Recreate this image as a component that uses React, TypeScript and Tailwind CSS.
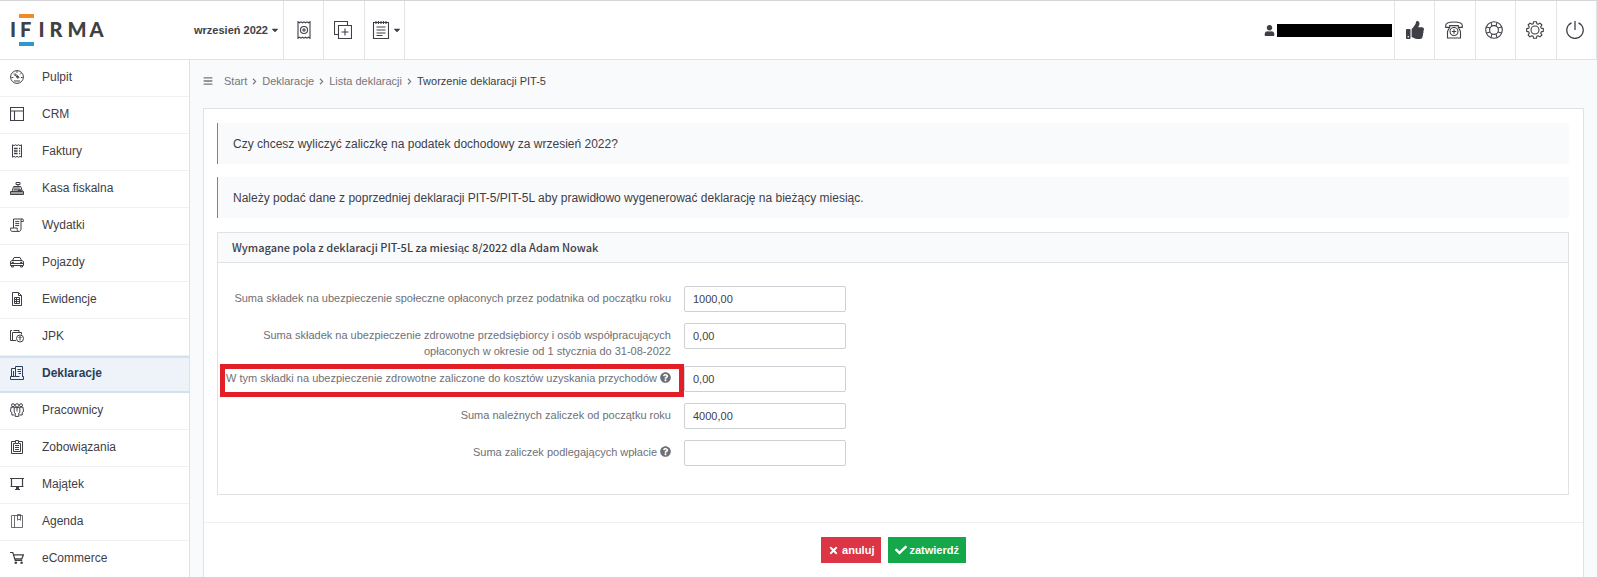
import { useState } from "react";
import type { ReactNode } from "react";
import {
  FaBars,
  FaCaretDown,
  FaCheck,
  FaChevronRight,
  FaQuestionCircle,
  FaThumbsUp,
  FaTimes,
  FaUser,
} from "react-icons/fa";

// line icons, drawn on a 14px grid for the menu and an 18px grid for the top bar
function MenuIcon({ children }: { children: ReactNode }) {
  return (
    <svg width="14" height="14" viewBox="0 0 14 14" fill="none" stroke="currentColor" strokeWidth="1" aria-hidden="true">
      {children}
    </svg>
  );
}

function BarIcon({ children }: { children: ReactNode }) {
  return (
    <svg width="18" height="18" viewBox="0 0 18 18" fill="none" stroke="currentColor" strokeWidth="1.1" aria-hidden="true">
      {children}
    </svg>
  );
}

const menu = [
  {
    label: "Pulpit",
    icon: (
      <>
        <circle cx="7" cy="7" r="6.4" />
        <path d="M3.6 4.2 8 7.6M4.6 3.4 8.6 6.8M1.5 7.5h1.8M10.8 7.5h1.8M7 1.2v1.6M11.2 3.2 10 4.4M4 11h6" />
        <circle cx="7.8" cy="7.2" r="1" />
      </>
    ),
  },
  {
    label: "CRM",
    icon: <path d="M.5.5h13v13H.5zM.5 4h13M4.500 4v9.500" strokeWidth="1.1" />,
  },
  {
    label: "Faktury",
    icon: (
      <>
        <path d="M2.5.8 4 1.6 5.5.8 7 1.6 8.500.8 10 1.6 11.500.8v12.400l-1.500-.8-1.500.8-1.500-.8-1.500.8-1.500-.8-1.500.8z" />
        <path d="M4 4.500h3.600M4 7h3.600M4 9.500h3.600M9 4.500h1.200M9 7h1.200M9 9.500h1.200" strokeWidth="1.3" />
      </>
    ),
  },
  {
    label: "Kasa fiskalna",
    icon: (
      <>
        <path d="M.5 10.500h13v3H.5zM2 10.500l1.600-5h7.200l1.600 5M8 5.200V3.500M6 1.500h4v2H6z" />
        <path d="M4 7h6M3.500 8.800h4M1 12h12" strokeWidth="1.2" />
        <path d="M7.500 8.200h4v1.800h-4z" fill="currentColor" stroke="none" />
      </>
    ),
  },
  {
    label: "Wydatki",
    icon: (
      <>
        <path d="M3.5 10V1h8.8c-1 0-1.3.8-1.3 1.6V11c0 1.4-.8 2.4-2 2.4H2.2C1.2 13.4.6 12.6.6 11.5V10h6.6v1.6c0 1.2.7 1.8 1.6 1.8M11 3.4h2.4V2.2c0-.7-.5-1.2-1.1-1.2" />
        <path d="M5.2 3.6h4M5.2 5.6h4M5.2 7.6h4" />
      </>
    ),
  },
  {
    label: "Pojazdy",
    icon: (
      <>
        <path d="M2.500 5.500 4 2.500h6l1.500 3M.5 6.500 2 5.500h10l1.500 1v4H.5zM.5 8.500h13M1.500 10.500v1.500h2v-1.500M10.500 10.500v1.500h2v-1.500" />
        <path d="M1.800 7.400h2M10.200 7.400h2" strokeWidth="1.2" />
      </>
    ),
  },
  {
    label: "Ewidencje",
    icon: (
      <>
        <path d="M2.500.5h6l3 3v10h-9zM8.500.5v3h3" />
        <path d="M4.500 5.500h5v6h-5zM4.500 7.500h5M4.500 9.500h5M6.500 5.500v6" />
      </>
    ),
  },
  {
    label: "JPK",
    icon: (
      <>
        <path d="M6 11.500H.5v-10H2M2.500 11v-7.500h9v2M3.500 1.500H9v2" />
        <circle cx="10" cy="9.500" r="3.500" />
        <path d="M10 11.500V7.600M8.600 9 10 7.500 11.400 9" />
      </>
    ),
  },
  {
    label: "Deklaracje",
    icon: (
      <>
        <path d="M5.500 10.500H.5v3h13v-3h-1M1.500 10.500v-8H5M12.500 11V.5h-7v10h4M3.500 5v5" />
        <path d="M7.500 3.500h3.500M7.500 5.500h3.500M8.500 7.500h2.500" />
      </>
    ),
  },
  {
    label: "Pracownicy",
    icon: (
      <>
        <circle cx="3" cy="2.200" r="1.500" />
        <circle cx="7" cy="2.400" r="1.700" />
        <circle cx="11" cy="2.200" r="1.500" />
        <path d="M4.200 4.600h5.600v4.600L8.800 10v3.400H5.200V10l-1-.8zM4 4.200H1L.5 8.500l1.300.8V12h2.600M10 4.200h3l.5 4.300-1.300.8V12H9.600M7 5v3.500" />
      </>
    ),
  },
  {
    label: "Zobowiązania",
    icon: (
      <>
        <path d="M5 1.500H1.500v12h11v-12H9M5 3.500H3.500v8h7v-8H9" />
        <path d="M5.500.5h3v3h-3zM5 5.500h4M5 7.500h4M5 9.500h4" />
      </>
    ),
  },
  {
    label: "Majątek",
    icon: (
      <>
        <path d="M0 1.500h14M1.500 1.500v8M12.500 1.500v8M.5 9.500h13" strokeWidth="1.200" />
        <path d="M5 12.500h5" />
        <path d="M6 10h3v2.500H6z" fill="currentColor" stroke="none" />
      </>
    ),
  },
  {
    label: "Agenda",
    icon: <path d="M1.500 1.500h11v12h-11zM4.500 1.500v12M7.500.5h3v5.800L9 5 7.500 6.300z" strokeOpacity=".75" />,
  },
  {
    label: "eCommerce",
    icon: (
      <>
        <path d="M0 1.500h2.800l2.400 7.800h7M3.500 3.800h9.900l-1.600 4H5" strokeWidth="1.200" />
        <circle cx="5.800" cy="11.800" r="1.300" fill="currentColor" stroke="none" />
        <circle cx="11.600" cy="11.800" r="1.300" fill="currentColor" stroke="none" />
      </>
    ),
  },
];

const tools = [
  {
    label: "Pomoc telefoniczna",
    icon: (
      <>
        <path d="M.7 6.400V4.600C.7 2.600 3 1 9 1s8.300 1.600 8.300 3.600v1.800h-4V4.600H4.700v1.800z" />
        <path d="M4.400 6.600C4 8.500 2.500 9 2.500 11v6h13v-6c0-2-1.500-2.500-1.900-4.400" />
        <circle cx="9" cy="10.500" r="4" />
        <path d="M9 8.300v4.400M6.800 10.500h4.400" />
      </>
    ),
  },
  {
    label: "Pomoc",
    icon: (
      <>
        <circle cx="9" cy="9" r="8.300" />
        <circle cx="9" cy="9" r="4.400" />
        <path d="M6 1.400 7 5.100M12 1.400 11 5.100M6 16.600 7 12.900M12 16.600 11 12.900M1.400 6 5.100 7M1.400 12 5.100 11M16.600 6 12.900 7M16.600 12 12.900 11" />
      </>
    ),
  },
  {
    label: "Ustawienia",
    icon: (
      <>
        <circle cx="9" cy="9" r="4" />
        <path d="M7.600.7h2.800l.5 2.100 1.200.5 1.900-1.200 1.900 1.900-1.200 1.900.5 1.200 2.100.5v2.800l-2.100.5-.5 1.200 1.200 1.900-1.900 1.900-1.900-1.200-1.200.5-.5 2.100H7.600l-.5-2.100-1.200-.5L4 15.900 2.100 14l1.200-1.900-.5-1.200-2.100-.5V7.600l2.100-.5.5-1.200L2.100 4 4 2.100l1.900 1.200 1.200-.5z" strokeLinejoin="round" />
      </>
    ),
  },
  {
    label: "Wyloguj",
    icon: <path d="M9 0v9M5.500 1.800a8.200 8.200 0 1 0 7 0" strokeWidth="1.300" />,
  },
];

type Field = { name: string; label: string; help?: boolean; marked?: boolean };

const fields: Field[] = [
  { name: "spoleczne", label: "Suma składek na ubezpieczenie społeczne opłaconych przez podatnika od początku roku" },
  {
    name: "zdrowotne",
    label:
      "Suma składek na ubezpieczenie zdrowotne przedsiębiorcy i osób współpracujących opłaconych w okresie od 1 stycznia do 31-08-2022",
  },
  {
    name: "koszty",
    label: "W tym składki na ubezpieczenie zdrowotne zaliczone do kosztów uzyskania przychodów",
    help: true,
    marked: true,
  },
  { name: "nalezne", label: "Suma należnych zaliczek od początku roku" },
  { name: "wplata", label: "Suma zaliczek podlegających wpłacie", help: true },
];

function Logo() {
  return (
    <svg width="96" height="34" viewBox="0 0 96 34" role="img" aria-label="IFIRMA">
      <rect x="9" y="1" width="15" height="4" fill="#f08c28" />
      <rect x="9" y="29" width="15" height="4" fill="#2f96d0" />
      <text x="0 10 28.500 39.500 57.500 79.500" y="24" fontFamily="Lato, sans-serif" fontWeight="900" fontSize="20" fill="#414042">
        IFIRMA
      </text>
    </svg>
  );
}

function Header() {
  const cell = "flex items-center border-l border-[#e3e4e6]";
  return (
    <header className="flex h-[60px] justify-between border-y border-t-[#d5d5d7] border-b-[#e1e2e4] bg-white">
      <div className="flex">
        <a href="#" className="flex w-[189px] items-center pl-[10px]">
          <Logo />
        </a>
        <button className="flex w-[94px] items-center justify-between pr-[3px] pl-[5px] text-[11px] font-bold whitespace-nowrap">
          wrzesień 2022
          <FaCaretDown size={10} />
        </button>
        <div className="grid w-[122px] grid-cols-3 border-r border-[#e3e4e6]">
          <button className={`${cell} justify-center`} aria-label="Nowy paragon">
            <BarIcon>
              <path d="M3 .8 4.500 1.800 6 .8 7.500 1.800 9 .8l1.500 1 1.500-1 1.500 1 1.500-1v16.400l-1.500-1-1.500 1-1.500-1-1.500 1-1.500-1-1.500 1-1.500-1-1.500 1z" />
              <circle cx="9" cy="9" r="3.500" />
              <path d="M9 7v4M7 9h4" />
            </BarIcon>
          </button>
          <button className={`${cell} justify-center pr-[2px]`} aria-label="Dodaj">
            <BarIcon>
              <path d="M4.500 13.500h-4V.5h13v4M4.500 4.500h13v13h-13zM11 7.500v7M7.500 11h7" />
            </BarIcon>
          </button>
          <button className={`${cell} justify-end gap-[2px] pr-[2px]`} aria-label="Lista">
            <BarIcon>
              <path d="M1.500 1.500h15v16h-15zM4.500 6h9M4.500 9h9M4.500 12h9M4.500 14.500h6" />
              <path d="M4 0v3M6.500 0v3M9 0v3M11.500 0v3M14 0v3" />
            </BarIcon>
            <FaCaretDown size={10} />
          </button>
        </div>
      </div>
      <div className="flex">
        <div className="flex items-center gap-[2px] pr-[2px]">
          <FaUser size={11} />
          <div className="h-[13px] w-[115px] bg-black" />
        </div>
        <div className="grid w-[203px] grid-cols-5 border-r border-[#e3e4e6]">
          <button className={`${cell} justify-center`} aria-label="Poleć nas">
            <FaThumbsUp size={18} />
          </button>
          {tools.map((t) => (
            <button key={t.label} className={`${cell} justify-center pr-[2px]`} aria-label={t.label}>
              <BarIcon>{t.icon}</BarIcon>
            </button>
          ))}
        </div>
      </div>
    </header>
  );
}

function Sidebar() {
  return (
    <nav className="w-[190px] shrink-0 border-r border-[#dfe2e3] bg-white">
      {menu.map((item) => {
        const active = item.label === "Deklaracje";
        return (
          <a
            key={item.label}
            href="#"
            className={`flex h-[37px] items-center gap-[18px] pl-[10px] text-xs last:h-9 last:border-b-0 ${
              active
                ? "border-y-2 border-[#d3e1ee] bg-[#eef3fa] pb-[3px] font-bold text-[#2c3e57]"
                : "border-b border-[#f0f1f2] pb-[2px]"
            }`}
          >
            <MenuIcon>{item.icon}</MenuIcon>
            {item.label}
          </a>
        );
      })}
    </nav>
  );
}

function Breadcrumbs() {
  const links = ["Start", "Deklaracje", "Lista deklaracji"];
  return (
    <div className="flex h-12 items-center pb-[6px] text-[11px] text-[#74757b]">
      <button className="mr-[11px]" aria-label="Zwiń menu">
        <FaBars size={10} />
      </button>
      {links.map((l) => (
        <span key={l} className="mr-1 flex items-center gap-1">
          <a href="#">{l}</a>
          <FaChevronRight size={7} />
        </span>
      ))}
      <span className="text-[#3c3d44]">Tworzenie deklaracji PIT-5</span>
    </div>
  );
}

function Notice({ children }: { children: ReactNode }) {
  return (
    <p className="flex h-[41px] items-center rounded-r-xs border-l border-l-[#2ba3bd] bg-[#f9fafc] pl-[15px] text-xs">
      {children}
    </p>
  );
}

export default function App() {
  const [values, setValues] = useState<Record<string, string>>({
    spoleczne: "1000,00",
    zdrowotne: "0,00",
    koszty: "0,00",
    nalezne: "4000,00",
    wplata: "",
  });

  const handleChange = (e: React.ChangeEvent<HTMLInputElement>) => {
    setValues({ ...values, [e.target.name]: e.target.value });
  };

  return (
    <div className="flex min-h-screen flex-col bg-[#f9fafc] font-['Liberation_Sans',Arial,sans-serif] text-[#3f4047]">
      <Header />
      <div className="flex flex-1">
        <Sidebar />
        <main className="flex min-w-0 flex-1 flex-col px-[13px]">
          <Breadcrumbs />
          <form className="flex-1 border border-b-0 border-[#e1e2e4] bg-white" onSubmit={(e) => e.preventDefault()}>
            <div className="pt-[14px] pr-[14px] pb-[27px] pl-[13px]">
              <div className="mb-[14px] flex flex-col gap-[13px]">
                <Notice>Czy chcesz wyliczyć zaliczkę na podatek dochodowy za wrzesień 2022?</Notice>
                <Notice>
                  Należy podać dane z poprzedniej deklaracji PIT-5/PIT-5L aby prawidłowo wygenerować deklarację na
                  bieżący miesiąc.
                </Notice>
              </div>

              <section className="border border-[#e1e2e4]">
                <h2 className="flex h-[30px] items-center border-b border-[#e1e2e4] bg-[#f9fafb] pb-px pl-[14px] font-['Noto_Sans_CJK_SC',sans-serif] text-[11px] font-medium">
                  Wymagane pola z deklaracji PIT-5L za miesiąc 8/2022 dla Adam Nowak
                </h2>
                <div className="pt-[23px] pb-[17px]">
                  {fields.map((f) => (
                    <div key={f.name} className="flex min-h-[37px] items-start">
                      <div className="relative w-[466px] pt-1 pr-[13px] pb-[7px] text-right text-[11px] leading-4 text-[#6f7076]">
                        <label htmlFor={f.name}>{f.label}</label>
                        {f.help && <FaQuestionCircle size={11} className="ml-[3px] inline align-[-1px]" />}
                        {f.marked && (
                          <div className="absolute -top-[2px] right-0 left-[2px] h-[33px] border-[5px] border-[#e41e26]" />
                        )}
                      </div>
                      <input
                        id={f.name}
                        name={f.name}
                        type="text"
                        value={values[f.name]}
                        onChange={handleChange}
                        className="h-[26px] w-[162px] rounded-xs border border-[#cdd0d4] bg-white px-2 text-[11px] focus:outline-none"
                      />
                    </div>
                  ))}
                </div>
              </section>
            </div>

            <div className="flex justify-center gap-[7px] border-t border-[#efeff1] pt-[14px] text-[11px] font-bold text-white">
              <button type="button" className="flex h-[26px] items-center gap-[3px] bg-[#dc3545] px-[7px]">
                <FaTimes size={11} />
                anuluj
              </button>
              <button type="submit" className="flex h-[26px] items-center gap-[2px] bg-[#15a84a] px-[7px]">
                <FaCheck size={12} />
                zatwierdź
              </button>
            </div>
          </form>
        </main>
      </div>
    </div>
  );
}
